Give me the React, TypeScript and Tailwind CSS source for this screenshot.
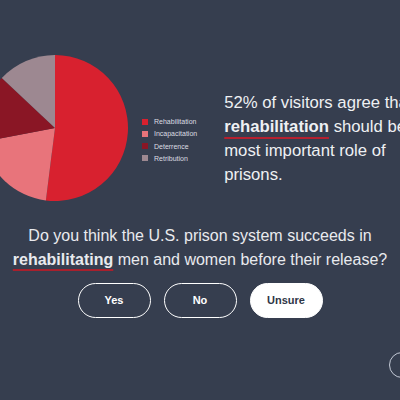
import React from 'react';

const slices = [
  { label: 'Rehabilitation', value: 52, color: '#d8212f' },
  { label: 'Incapacitation', value: 20, color: '#e8747b' },
  { label: 'Deterrence', value: 15, color: '#8a1625' },
  { label: 'Retribution', value: 13, color: '#9d8891' },
];

function Pie() {
  const r = 73;
  const c = 73;
  let start = 0;
  const point = (deg: number) => {
    const a = (deg * Math.PI) / 180;
    return [c + r * Math.sin(a), c - r * Math.cos(a)];
  };
  return (
    <svg width="146" height="146" viewBox="0 0 146 146" className="shrink-0 -ml-[18px]">
      {slices.map((s) => {
        const end = start + (s.value / 100) * 360;
        const [x1, y1] = point(start);
        const [x2, y2] = point(end);
        const large = end - start > 180 ? 1 : 0;
        const d = `M${c},${c} L${x1},${y1} A${r},${r} 0 ${large} 1 ${x2},${y2} Z`;
        start = end;
        return <path key={s.label} d={d} fill={s.color} />;
      })}
    </svg>
  );
}

function Legend() {
  return (
    <ul className="ml-[14px] mt-[63px] flex flex-col gap-[5.3px]">
      {slices.map((s) => (
        <li key={s.label} className="flex items-center gap-[6px] text-[7px] leading-[7px] text-[#dcdde2]">
          <span className="inline-block h-[6px] w-[6px]" style={{ backgroundColor: s.color }} />
          {s.label}
        </li>
      ))}
    </ul>
  );
}

export default function App() {
  return (
    <main
      className="relative h-[400px] w-[400px] overflow-hidden bg-[#363e4f] text-[#eef0f3]"
      style={{ fontFamily: '"Liberation Sans", Arial, sans-serif' }}
    >
      <section className="flex items-start pt-[55px]">
        <Pie />
        <Legend />
        <p className="ml-[27px] mt-[36px] whitespace-nowrap text-[16.7px] leading-[24px]">
          52% of visitors agree that
          <br />
          <span className="font-bold underline decoration-[#b5202f] decoration-2 underline-offset-[5px]">
            rehabilitation
          </span>{' '}
          should be the
          <br />
          most important role of
          <br />
          prisons.
        </p>
      </section>

      <section className="mt-[23px] flex flex-col items-center">
        <p className="whitespace-nowrap text-center text-[16px] leading-[24px] text-[#e9eaee]">
          Do you think the U.S. prison system succeeds in
          <br />
          <span className="font-bold underline decoration-[#a8202d] decoration-[1.5px] underline-offset-[4px]">
            rehabilitating
          </span>{' '}
          men and women before their release?
        </p>

        <div className="mt-[11px] flex gap-[13px]">
          <button className="h-[35px] w-[73px] rounded-full border-[1.5px] border-white text-[11px] font-bold text-white">
            Yes
          </button>
          <button className="h-[35px] w-[73px] rounded-full border-[1.5px] border-white text-[11px] font-bold text-white">
            No
          </button>
          <button className="h-[35px] w-[73px] rounded-full border-[1.5px] border-white bg-white text-[11px] font-bold text-[#2f3646]">
            Unsure
          </button>
        </div>
      </section>

      <div className="absolute left-[389px] top-[352px] h-[26px] w-[26px] rounded-full border-[1.5px] border-[#c4cad6]" />
    </main>
  );
}
